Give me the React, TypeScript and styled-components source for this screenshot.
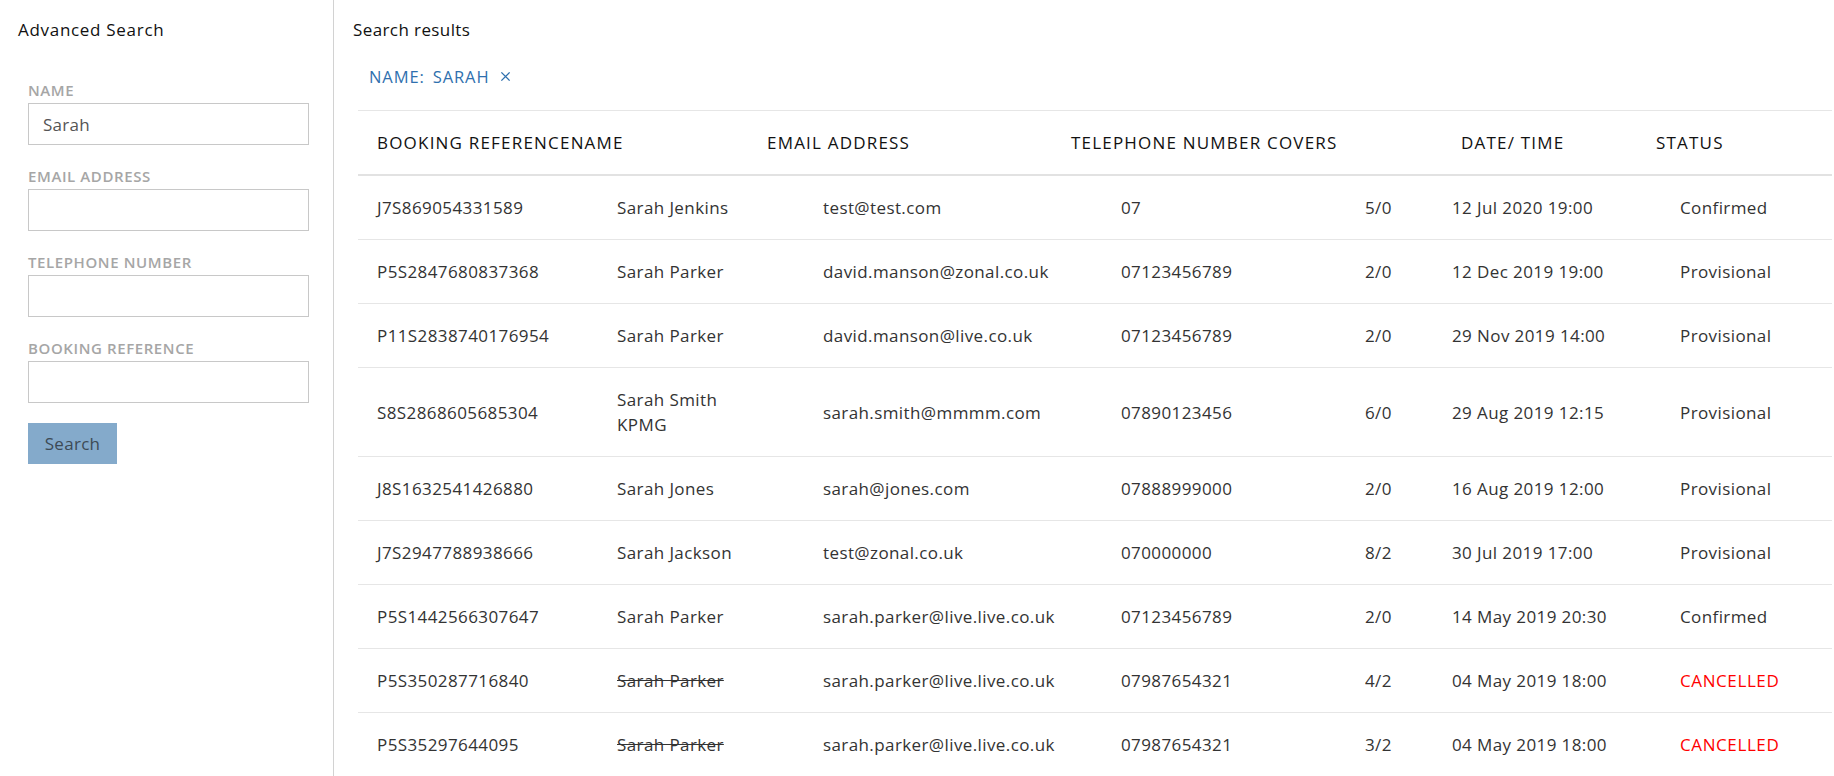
import React from "react";
import styled, { createGlobalStyle } from "styled-components";

const Global = createGlobalStyle`
  html, body { margin: 0; padding: 0; background: #fff; overflow: hidden; }
  body { font-family: "Open Sans", "Liberation Sans", sans-serif; color: #333; }
  * { box-sizing: border-box; }
`;

const Page = styled.div`
  display: flex;
  min-height: 100vh;
`;

const Sidebar = styled.aside`
  width: 334px;
  flex: none;
  border-right: 1px solid #d2d2d2;
  padding-top: 20px;
`;

const SideTitle = styled.h2`
  margin: 0 0 0 18px;
  font-size: 17px;
  line-height: 20px;
  font-weight: 400;
  letter-spacing: 0.7px;
  color: #111;
`;

const Form = styled.form`
  display: flex;
  flex-direction: column;
  margin: 41px 0 0 28px;
  width: 281px;
`;

const Field = styled.div`
  display: flex;
  flex-direction: column;
  gap: 4px;
  margin-bottom: 22px;
`;

const Label = styled.label`
  font-size: 15px;
  line-height: 18px;
  font-weight: 600;
  letter-spacing: 0.6px;
  color: #a6a6a6;
  text-transform: uppercase;
`;

const Input = styled.input`
  height: 42px;
  width: 100%;
  border: 1px solid #c8c8c8;
  padding: 0 14px;
  font-family: inherit;
  font-size: 17px;
  letter-spacing: 0.3px;
  color: #555;
  outline: none;
`;

const SearchButton = styled.button`
  align-self: flex-start;
  margin-top: -2px;
  width: 89px;
  height: 41px;
  border: none;
  background: #84aacb;
  color: #3d4a56;
  font-family: inherit;
  font-size: 17px;
  letter-spacing: 0.3px;
`;

const Main = styled.main`
  flex: 1;
  padding: 20px 2px 0 19px;
  min-width: 0;
`;

const Title = styled.h1`
  margin: 0;
  font-size: 17px;
  line-height: 20px;
  font-weight: 400;
  letter-spacing: 0.4px;
  color: #111;
`;

const Filters = styled.div`
  display: flex;
  align-items: center;
  margin: 26px 0 0 16px;
  height: 20px;
  gap: 10px;
  color: #2f70ae;
  font-size: 16.5px;
  letter-spacing: 0.9px;
  text-transform: uppercase;
`;

const FilterKey = styled.span`
  margin-right: -2px;
`;

const RemoveIcon = styled.svg`
  width: 11px;
  height: 11px;
  margin-left: 1px;
`;

const Table = styled.div`
  margin-top: 24px;
  margin-left: 5px;
`;

const HeadRow = styled.div`
  display: grid;
  grid-template-columns: 390px 304px 390px 195px 1fr;
  border-top: 1px solid #e6e6e6;
  border-bottom: 2px solid #e2e2e2;
`;

const HeadCell = styled.div`
  padding: 19px 0 19px 19px;
  font-size: 17px;
  line-height: 25px;
  letter-spacing: 1.2px;
  color: #111;
  white-space: nowrap;
  text-transform: uppercase;
`;

const Row = styled.div`
  display: grid;
  grid-template-columns: 240px 206px 298px 244px 87px 228px 1fr;
  border-bottom: 1px solid #e6e6e6;
  align-items: center;
`;

const Cell = styled.div<{ $struck?: boolean; $cancelled?: boolean; $wrap?: number }>`
  padding: 19px 0 19px 19px;
  font-size: 17px;
  line-height: 25px;
  letter-spacing: ${(p) => (p.$cancelled ? "0.6px" : "0.4px")};
  color: ${(p) => (p.$cancelled ? "#ff0000" : "#333")};
  text-decoration: ${(p) => (p.$struck ? "line-through" : "none")};
  text-transform: ${(p) => (p.$cancelled ? "uppercase" : "none")};
  max-width: ${(p) => (p.$wrap ? `${p.$wrap}px` : "none")};
  box-sizing: content-box;
  white-space: ${(p) => (p.$wrap ? "normal" : "nowrap")};
`;

type Booking = {
  ref: string;
  name: string;
  email: string;
  phone: string;
  covers: string;
  date: string;
  status: string;
};

const bookings: Booking[] = [
  { ref: "J7S869054331589", name: "Sarah Jenkins", email: "test@test.com", phone: "07", covers: "5/0", date: "12 Jul 2020 19:00", status: "Confirmed" },
  { ref: "P5S2847680837368", name: "Sarah Parker", email: "david.manson@zonal.co.uk", phone: "07123456789", covers: "2/0", date: "12 Dec 2019 19:00", status: "Provisional" },
  { ref: "P11S2838740176954", name: "Sarah Parker", email: "david.manson@live.co.uk", phone: "07123456789", covers: "2/0", date: "29 Nov 2019 14:00", status: "Provisional" },
  { ref: "S8S2868605685304", name: "Sarah Smith KPMG", email: "sarah.smith@mmmm.com", phone: "07890123456", covers: "6/0", date: "29 Aug 2019 12:15", status: "Provisional" },
  { ref: "J8S1632541426880", name: "Sarah Jones", email: "sarah@jones.com", phone: "07888999000", covers: "2/0", date: "16 Aug 2019 12:00", status: "Provisional" },
  { ref: "J7S2947788938666", name: "Sarah Jackson", email: "test@zonal.co.uk", phone: "070000000", covers: "8/2", date: "30 Jul 2019 17:00", status: "Provisional" },
  { ref: "P5S1442566307647", name: "Sarah Parker", email: "sarah.parker@live.live.co.uk", phone: "07123456789", covers: "2/0", date: "14 May 2019 20:30", status: "Confirmed" },
  { ref: "P5S350287716840", name: "Sarah Parker", email: "sarah.parker@live.live.co.uk", phone: "07987654321", covers: "4/2", date: "04 May 2019 18:00", status: "CANCELLED" },
  { ref: "P5S35297644095", name: "Sarah Parker", email: "sarah.parker@live.live.co.uk", phone: "07987654321", covers: "3/2", date: "04 May 2019 18:00", status: "CANCELLED" },
];

const fields = [
  { label: "Name", value: "Sarah" },
  { label: "Email address", value: "" },
  { label: "Telephone number", value: "" },
  { label: "Booking reference", value: "" },
];

export default function App() {
  return (
    <>
      <Global />
      <Page>
        <Sidebar>
          <SideTitle>Advanced Search</SideTitle>
          <Form onSubmit={(e) => e.preventDefault()}>
            {fields.map((f) => (
              <Field key={f.label}>
                <Label>{f.label}</Label>
                <Input defaultValue={f.value} />
              </Field>
            ))}
            <SearchButton type="submit">Search</SearchButton>
          </Form>
        </Sidebar>
        <Main>
          <Title>Search results</Title>
          <Filters>
            <FilterKey>Name:</FilterKey>
            <span>Sarah</span>
            <RemoveIcon viewBox="0 0 12 12" aria-label="remove">
              <path d="M1.5 1.5 L10.5 10.5 M10.5 1.5 L1.5 10.5" stroke="#2f70ae" strokeWidth="1.5" fill="none" />
            </RemoveIcon>
          </Filters>
          <Table>
            <HeadRow>
              <HeadCell>
                <span>Booking Reference</span>
                <span>Name</span>
              </HeadCell>
              <HeadCell>Email Address</HeadCell>
              <HeadCell>Telephone Number Covers</HeadCell>
              <HeadCell>Date/ Time</HeadCell>
              <HeadCell>Status</HeadCell>
            </HeadRow>
            {bookings.map((b) => {
              const cancelled = b.status === "CANCELLED";
              return (
                <Row key={b.ref}>
                  <Cell>{b.ref}</Cell>
                  <Cell $struck={cancelled} $wrap={140}>{b.name}</Cell>
                  <Cell>{b.email}</Cell>
                  <Cell>{b.phone}</Cell>
                  <Cell>{b.covers}</Cell>
                  <Cell>{b.date}</Cell>
                  <Cell $cancelled={cancelled}>{b.status}</Cell>
                </Row>
              );
            })}
          </Table>
        </Main>
      </Page>
    </>
  );
}
